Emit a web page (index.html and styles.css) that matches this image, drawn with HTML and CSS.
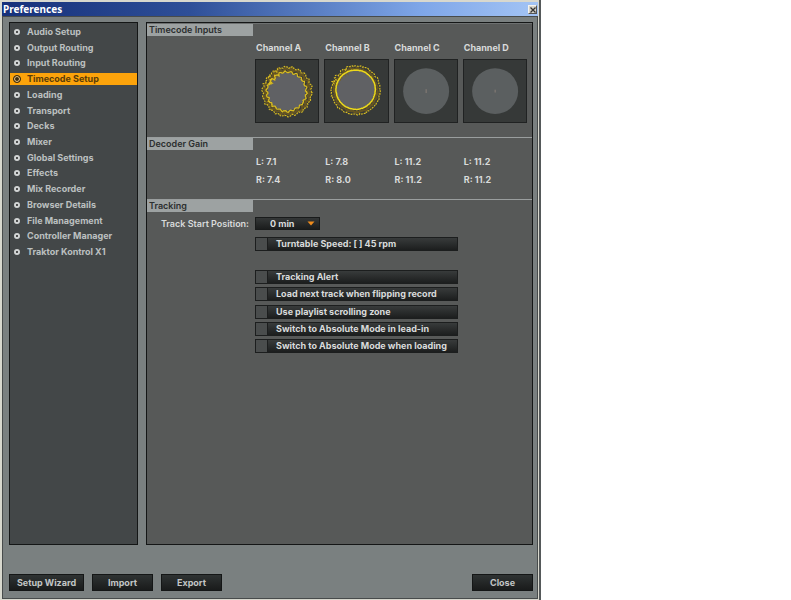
FILE: index.html
```html
<!DOCTYPE html>
<html lang="en">
<head>
<meta charset="utf-8">
<title>Preferences</title>
<link rel="stylesheet" href="styles.css">
</head>
<body>
<main class="window">
  <header class="titlebar">
    <h1>Preferences</h1>
    <button class="close-x" type="button" aria-label="Close window"><svg viewBox="0 0 8 8" width="8" height="8"><path d="M1.5 1.5l5 5M6.5 1.5l-5 5" stroke="#333" stroke-width="1.3"/></svg></button>
  </header>
  <div class="content">
    <div class="panels">
      <nav class="sidebar">
        <ul>
          <li><a href="#">Audio Setup</a></li>
          <li><a href="#">Output Routing</a></li>
          <li><a href="#">Input Routing</a></li>
          <li><a href="#" class="active" aria-current="page">Timecode Setup</a></li>
          <li><a href="#">Loading</a></li>
          <li><a href="#">Transport</a></li>
          <li><a href="#">Decks</a></li>
          <li><a href="#">Mixer</a></li>
          <li><a href="#">Global Settings</a></li>
          <li><a href="#">Effects</a></li>
          <li><a href="#">Mix Recorder</a></li>
          <li><a href="#">Browser Details</a></li>
          <li><a href="#">File Management</a></li>
          <li><a href="#">Controller Manager</a></li>
          <li><a href="#">Traktor Kontrol X1</a></li>
        </ul>
      </nav>
      <div class="settings">
        <section class="inputs">
          <h2>Timecode Inputs</h2>
          <div class="channels">
            <div class="channel"><h3>Channel A</h3><svg class="scope" data-scope="a" viewBox="0 0 65 65"><circle class="disc" cx="32" cy="33" r="20"/></svg></div>
            <div class="channel"><h3>Channel B</h3><svg class="scope" data-scope="b" viewBox="0 0 65 65"><circle class="disc" cx="32" cy="31" r="20"/></svg></div>
            <div class="channel"><h3>Channel C</h3><svg class="scope" viewBox="0 0 65 65"><circle class="disc idle" cx="32.5" cy="32.5" r="24"/><path class="dot" d="M32.5 30.5v4"/></svg></div>
            <div class="channel"><h3>Channel D</h3><svg class="scope" viewBox="0 0 65 65"><circle class="disc idle" cx="32.5" cy="32.5" r="24"/><path class="dot" d="M32.5 31v3"/></svg></div>
          </div>
        </section>
        <section class="gain">
          <h2>Decoder Gain</h2>
          <table>
            <tr><td>L: 7.1</td><td>L: 7.8</td><td>L: 11.2</td><td>L: 11.2</td></tr>
            <tr><td>R: 7.4</td><td>R: 8.0</td><td>R: 11.2</td><td>R: 11.2</td></tr>
          </table>
        </section>
        <section class="tracking">
          <h2>Tracking</h2>
          <div class="field">
            <label for="start">Track Start Position:</label>
            <span class="select"><select id="start"><option>0 min</option></select><svg viewBox="0 0 8 5" width="8" height="5"><path d="M.5 .5h7l-3.5 4z" fill="#f08c1c"/></svg></span>
          </div>
          <div class="checks">
            <label class="check"><input type="checkbox"><span>Turntable Speed: [ ] 45 rpm</span></label>
          </div>
          <div class="checks group">
            <label class="check"><input type="checkbox"><span>Tracking Alert</span></label>
            <label class="check"><input type="checkbox"><span>Load next track when flipping record</span></label>
            <label class="check"><input type="checkbox"><span>Use playlist scrolling zone</span></label>
            <label class="check"><input type="checkbox"><span>Switch to Absolute Mode in lead-in</span></label>
            <label class="check"><input type="checkbox"><span>Switch to Absolute Mode when loading</span></label>
          </div>
        </section>
      </div>
    </div>
    <footer>
      <button class="btn wide" type="button">Setup Wizard</button>
      <button class="btn" type="button">Import</button>
      <button class="btn" type="button">Export</button>
      <button class="btn last" type="button">Close</button>
    </footer>
  </div>
</main>
<script src="scopes.js"></script>
</body>
</html>
```
FILE: scopes.js
```js
// Draws the jittery timecode signal rings on the active channel scopes.
let seed = 7;
const rand = () => (seed = (seed * 16807) % 2147483647) / 2147483647 - 0.5;

function ring(svg, cx, cy, r, wave, noise, cls) {
  let d = "";
  for (let i = 0; i < 180; i++) {
    const t = (i / 180) * Math.PI * 2;
    const rough = noise > 0.5 && t > 3.4 && t < 4.3 ? 2 : 0;
    const q = r - rough / 2 + Math.sin(t * 22) * wave + rand() * (noise + rough);
    d += (i ? "L" : "M") + (cx + Math.cos(t) * q).toFixed(1) + " " + (cy + Math.sin(t) * q).toFixed(1);
  }
  const path = document.createElementNS("http://www.w3.org/2000/svg", "path");
  path.setAttribute("d", d + "Z");
  path.setAttribute("class", cls);
  svg.append(path);
}

const a = document.querySelector('[data-scope="a"]');
ring(a, 32.5, 33, 23, 1, 3, "haze");
ring(a, 32.5, 33, 25.5, 0.8, 1, "trace dotted");
ring(a, 32, 33, 20.5, 0.8, 1, "trace");

const b = document.querySelector('[data-scope="b"]');
ring(b, 32, 31.5, 22.5, 0, 2, "haze");
ring(b, 32, 31.5, 25.5, 0.3, 1, "trace dotted");
ring(b, 32, 31, 20.5, 0, 0.3, "trace bright");
```
FILE: styles.css
```css
*, *::before { box-sizing: border-box; }
body {
  margin: 0;
  background: #fff;
  font: 700 9px/12px Inter, "Liberation Sans", Arial, sans-serif;
  color: #d9dbdb;
}
h1, h2, h3, ul { margin: 0; padding: 0; font-size: inherit; font-weight: inherit; }
button, select { font: inherit; color: inherit; }

.window {
  display: flex;
  flex-direction: column;
  max-width: 541px;
  min-height: 100vh;
  padding: 2px 1px 1px 2px;
  background: #d8d8ce;
  border-right: 2px solid #55595a;
}
.titlebar {
  display: flex;
  align-items: center;
  justify-content: space-between;
  height: 14px;
  padding: 0 1px;
  background: linear-gradient(90deg, #16307a, #2e4f98 35%, #7ea6e8 78%, #a3c4f5);
}
.titlebar h1 {
  font: bold 10px/13px "Noto Sans", sans-serif;
  color: #fff;
}
.close-x {
  display: grid;
  place-items: center;
  width: 9px;
  height: 9px;
  padding: 0;
  background: #d6d3ca;
  border: 1px solid;
  border-color: #f4f4f0 #555 #555 #f4f4f0;
}
.content {
  flex: 1;
  display: flex;
  flex-direction: column;
  padding: 5px 4px 7px 6px;
  background: #7a8080;
  border: 1px solid #474b4b;
}
.panels { flex: 1; display: flex; gap: 8px; }
.sidebar {
  flex: none;
  width: 129px;
  background: #434748;
  border: 1px solid #141616;
}
.sidebar ul {
  display: grid;
  grid-auto-rows: 1fr;
  min-height: 237px;
  padding-top: 1px;
  list-style: none;
}
.sidebar li { display: grid; align-items: center; }
.sidebar a {
  display: flex;
  align-items: center;
  gap: 7px;
  padding-left: 4px;
  color: #bcc0c0;
  text-decoration: none;
}
.sidebar a::before {
  content: "";
  width: 6px;
  height: 6px;
  border: 2px solid #d2d5d5;
  border-radius: 50%;
  background: #222;
}
.sidebar .active { gap: 6px; padding-left: 3px; background: #fca30b; color: #5a3c08; }
.sidebar .active::before {
  width: 8px;
  height: 8px;
  border: 1px solid #3d2c10;
  background: #3d2c10;
  box-shadow: inset 0 0 0 1px #fbd28a;
}

.settings {
  flex: 1;
  min-width: 0;
  background: #575958;
  border: 1px solid #141616;
}
section { border-top: 1px solid #9a9e9e; }
section h2 {
  width: 106px;
  padding-left: 2px;
  background: #9da2a2;
  color: #2c2f2f;
  font-weight: 600;
}
.inputs { min-height: 114px; border-top-color: #6d7070; }
.inputs h3 { padding-left: 1px; line-height: 12px; }
.channels {
  display: grid;
  grid-template-columns: repeat(4, 1fr);
  gap: 5px;
  width: 272px;
  margin: 6px 0 0 108px;
}
.scope {
  display: block;
  width: 100%;
  margin-top: 5px;
  background: #363938;
  border: 1px solid #202222;
}
.disc { fill: #606164; }
.disc.idle { fill: #5b5f60; }
.dot { stroke: #8a8078; stroke-width: 1; }
.trace { fill: none; stroke: #d8bc20; stroke-width: 1.3; }
.bright { stroke: #ecd81c; stroke-width: 1.6; }
.dotted { stroke-dasharray: 2 1; stroke-width: 1.2; }
.haze { fill: none; stroke: #77601c; stroke-width: 2; opacity: .7; }

.gain { min-height: 62px; }
.gain table {
  width: 277px;
  margin: 3px 0 0 109px;
  border-collapse: collapse;
  table-layout: fixed;
}
.gain td { padding: 3px 0; }

.field { display: flex; align-items: center; gap: 6px; margin-top: 5px; }
.field label { width: 102px; text-align: right; white-space: nowrap; font-weight: 600; }
.select { display: grid; align-items: center; }
.select select, .select svg { grid-area: 1 / 1; }
.select select {
  appearance: none;
  width: 65px;
  height: 13px;
  padding: 0 0 0 14px;
  border: 1px solid #191b1b;
  border-radius: 0;
  background: linear-gradient(#343737, #1b1d1d);
}
.select svg { justify-self: end; margin-right: 5px; pointer-events: none; }

.checks {
  display: grid;
  align-content: space-between;
  width: 203px;
  margin: 7px 0 0 108px;
}
.checks.group { min-height: 83px; margin-top: 19px; }
.check {
  display: flex;
  height: 14px;
  border: 1px solid #1c1e1e;
  background: linear-gradient(#383b3b, #1c1e1e);
}
.check input {
  appearance: none;
  width: 12px;
  margin: 0;
  background: #4a4d4d;
  border-right: 1px solid #1c1e1e;
}
.check span { padding-left: 8px; white-space: nowrap; }

footer { display: flex; gap: 8px; padding-top: 29px; }
.btn {
  width: 61px;
  height: 17px;
  padding: 0;
  border: 1px solid #141616;
  border-radius: 0;
  background: linear-gradient(#2f3333, #191b1b);
  color: #c3c6c6;
}
.btn.wide { width: 75px; }
.btn.last { margin-left: auto; }
```
